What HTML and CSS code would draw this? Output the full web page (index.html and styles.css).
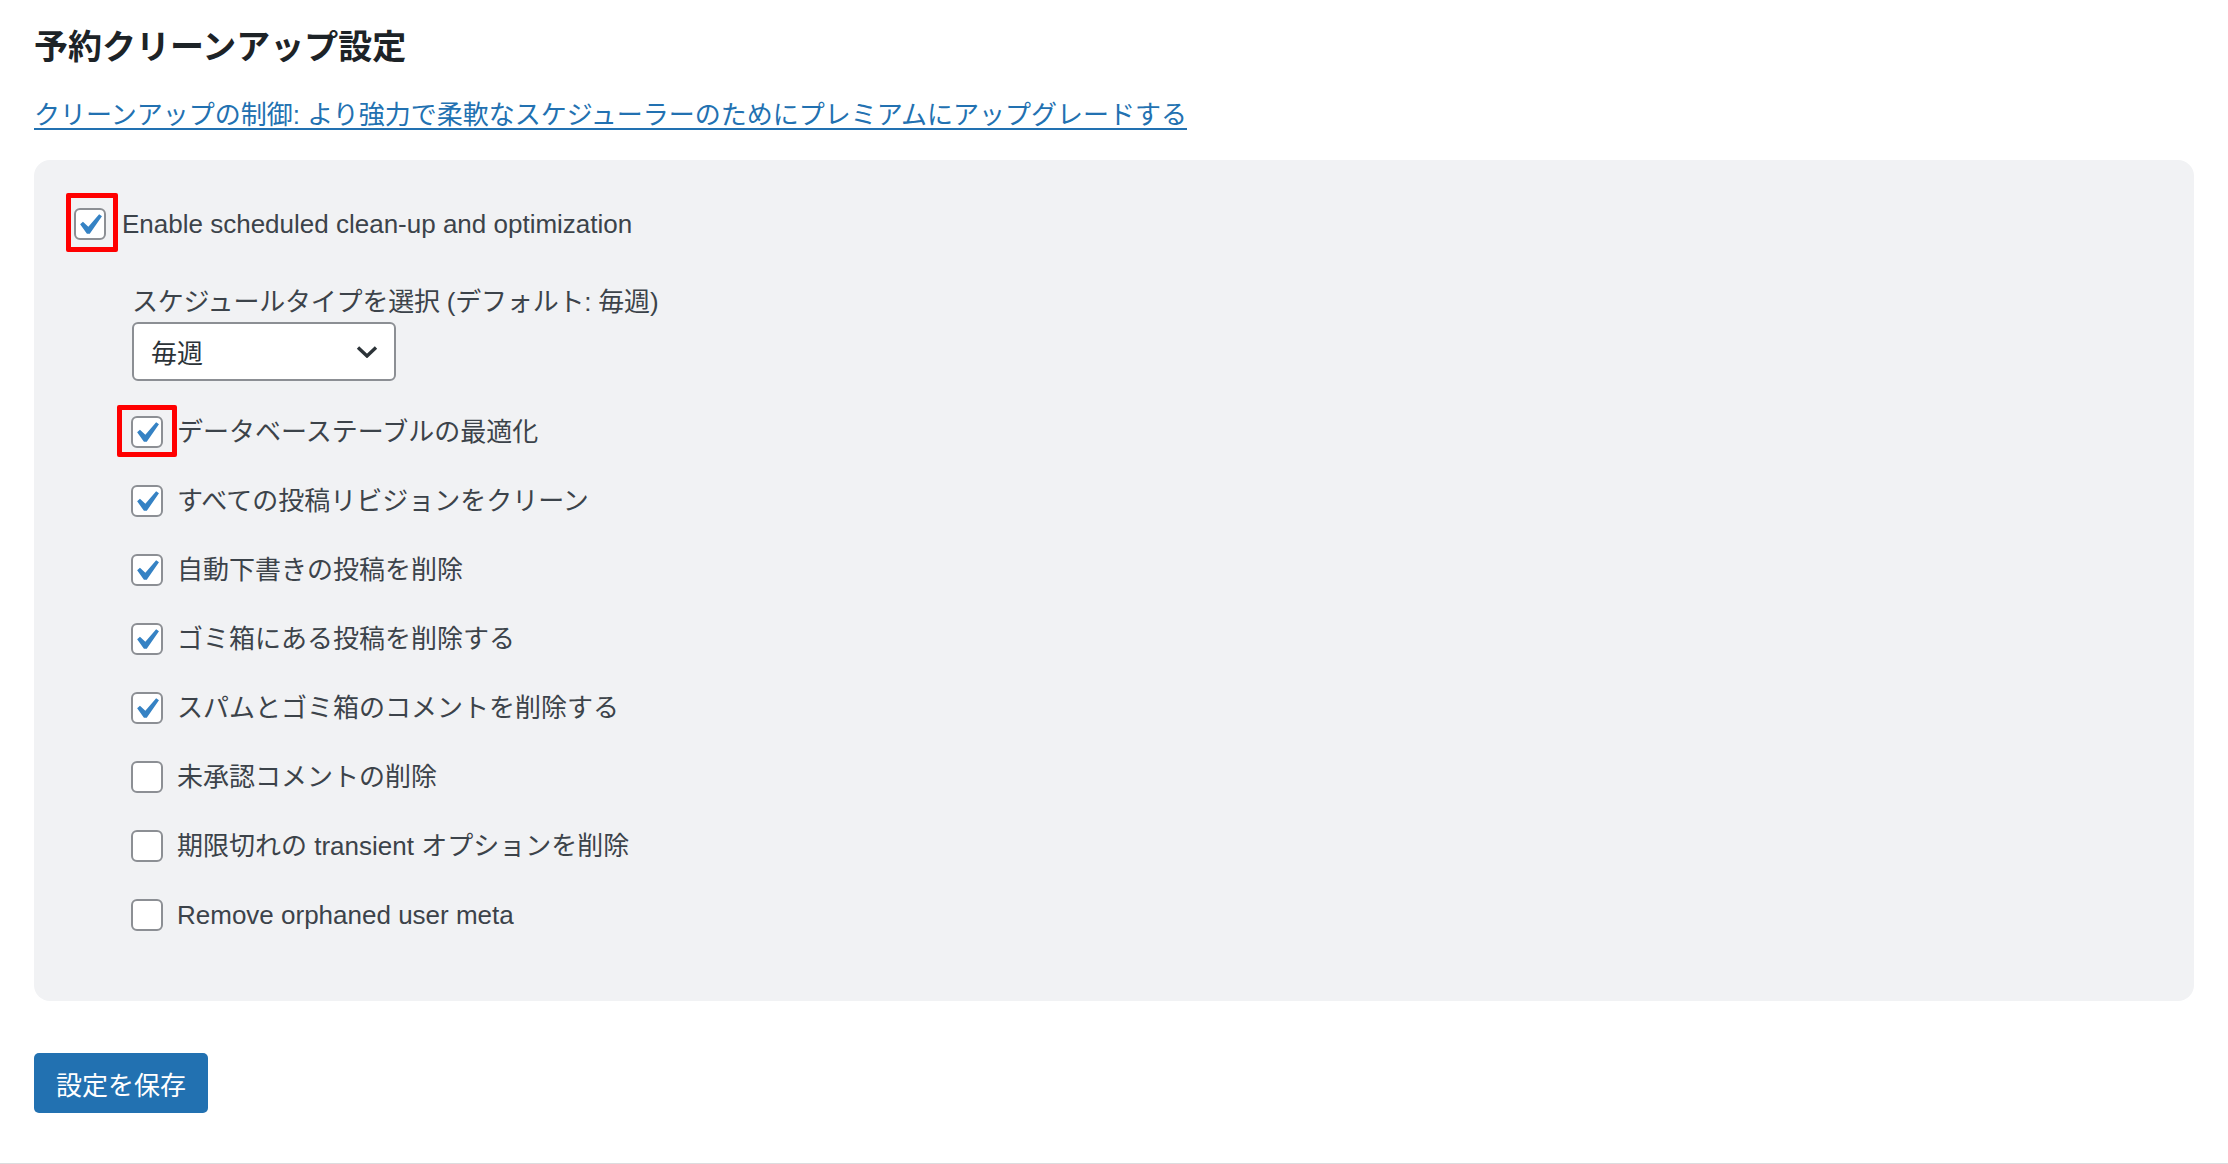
FILE: index.html
```html
<!DOCTYPE html>
<html lang="ja">
  <head>
    <meta charset="utf-8" />
    <title>予約クリーンアップ設定</title>

    <link rel="stylesheet" href="styles.css">
  </head>
  <body>
    <div class="wrap">
      <h2 class="page-title">予約クリーンアップ設定</h2>

      <p class="upgrade">
        <a href="#">クリーンアップの制御: より強力で柔軟なスケジューラーのためにプレミアムにアップグレードする</a>
      </p>

      <div class="panel">
        <label class="option option-main">
          <span class="checkbox is-checked mark-main">
            <svg viewBox="0 0 20 20"><path d="M14.83 4.89l1.34.94-5.81 8.38H9.02L5.78 9.67l1.34-1.25 2.57 2.4z" /></svg>
          </span>
          Enable scheduled clean-up and optimization
        </label>

        <div class="schedule">
          <div class="schedule-label">スケジュールタイプを選択 (デフォルト: 毎週)</div>
          <div class="select">
            <span>毎週</span>
            <svg class="chevron" viewBox="0 0 22 12"><polyline points="2,1.5 11,10 20,1.5" /></svg>
          </div>

          <ul class="options">
            <li class="option">
              <span class="checkbox is-checked mark-db">
                <svg viewBox="0 0 20 20"><path d="M14.83 4.89l1.34.94-5.81 8.38H9.02L5.78 9.67l1.34-1.25 2.57 2.4z" /></svg>
              </span>
              データベーステーブルの最適化
            </li>
            <li class="option">
              <span class="checkbox is-checked">
                <svg viewBox="0 0 20 20"><path d="M14.83 4.89l1.34.94-5.81 8.38H9.02L5.78 9.67l1.34-1.25 2.57 2.4z" /></svg>
              </span>
              すべての投稿リビジョンをクリーン
            </li>
            <li class="option">
              <span class="checkbox is-checked">
                <svg viewBox="0 0 20 20"><path d="M14.83 4.89l1.34.94-5.81 8.38H9.02L5.78 9.67l1.34-1.25 2.57 2.4z" /></svg>
              </span>
              自動下書きの投稿を削除
            </li>
            <li class="option">
              <span class="checkbox is-checked">
                <svg viewBox="0 0 20 20"><path d="M14.83 4.89l1.34.94-5.81 8.38H9.02L5.78 9.67l1.34-1.25 2.57 2.4z" /></svg>
              </span>
              ゴミ箱にある投稿を削除する
            </li>
            <li class="option">
              <span class="checkbox is-checked">
                <svg viewBox="0 0 20 20"><path d="M14.83 4.89l1.34.94-5.81 8.38H9.02L5.78 9.67l1.34-1.25 2.57 2.4z" /></svg>
              </span>
              スパムとゴミ箱のコメントを削除する
            </li>
            <li class="option">
              <span class="checkbox"></span>
              未承認コメントの削除
            </li>
            <li class="option">
              <span class="checkbox"></span>
              期限切れの transient オプションを削除
            </li>
            <li class="option">
              <span class="checkbox"></span>
              Remove orphaned user meta
            </li>
          </ul>
        </div>
      </div>

      <button class="save-button">設定を保存</button>

      <div class="page-footer"></div>
    </div>
  </body>
</html>
```

FILE: styles.css
```css
/* Base */

html,
body {
  margin: 0;
  padding: 0;
  background: #fff;
}

body {
  font-family: "Liberation Sans", "Noto Sans CJK JP", sans-serif;
  font-size: 26px;
  color: #3c434a;
}

.wrap {
  padding: 0 34px;
}

/* Header */

.page-title {
  margin: 24px 0 0;
  font-size: 34px;
  line-height: 46px;
  font-weight: 700;
  color: #1d2327;
}

.upgrade {
  margin: 27px 0 0;
  line-height: 36px;
}

.upgrade a {
  color: #2271b1;
  text-decoration: underline;
  text-decoration-thickness: 2px;
  text-underline-offset: 4px;
}

/* Panel */

.panel {
  margin-top: 27px;
  padding: 48px 40px 70px;
  background: #f1f2f4;
  border-radius: 16px;
}

.option {
  display: flex;
  align-items: center;
  gap: 16px;
  height: 32px;
  line-height: 32px;
}

.checkbox {
  position: relative;
  display: block;
  flex: none;
  width: 32px;
  height: 32px;
  box-sizing: border-box;
  border: 2px solid #8c8f94;
  border-radius: 6px;
  background: #fff;
}

.checkbox svg {
  display: block;
  width: 42px;
  height: 42px;
  margin: -6px 0 0 -8px;
  fill: #3582c4;
}

/* red annotation frames */

.mark-main::after,
.mark-db::after {
  content: "";
  position: absolute;
  border: 5px solid #f00;
  border-radius: 2px;
}

.mark-main::after {
  left: -10px;
  right: -14px;
  top: -17px;
  bottom: -14px;
}

.mark-db::after {
  left: -16px;
  right: -16px;
  top: -13px;
  bottom: -11px;
}

/* Schedule */

.schedule {
  margin: 44px 0 0 58px;
}

.schedule-label {
  line-height: 36px;
  letter-spacing: -0.2px;
}

.select {
  display: flex;
  align-items: center;
  justify-content: space-between;
  width: 264px;
  height: 59px;
  box-sizing: border-box;
  margin-top: 2px;
  padding: 0 16px 0 17px;
  border: 2px solid #8c8f94;
  border-radius: 6px;
  background: #fff;
  color: #2c3338;
}

.chevron {
  width: 22px;
  height: 12px;
  fill: none;
  stroke: #2c3338;
  stroke-width: 3.4;
}

.options {
  list-style: none;
  margin: 35px 0 0 -1px;
  padding: 0;
  display: flex;
  flex-direction: column;
  gap: 37px;
}

.options .option {
  gap: 14px;
}

/* Footer */

.save-button {
  display: block;
  margin-top: 52px;
  height: 60px;
  padding: 0 22px;
  border: none;
  border-radius: 5px;
  background: #2271b1;
  color: #fff;
  font-family: inherit;
  font-size: 26px;
}

.page-footer {
  margin: 50px -34px 0;
  border-top: 2px solid #dcdcde;
}
```
